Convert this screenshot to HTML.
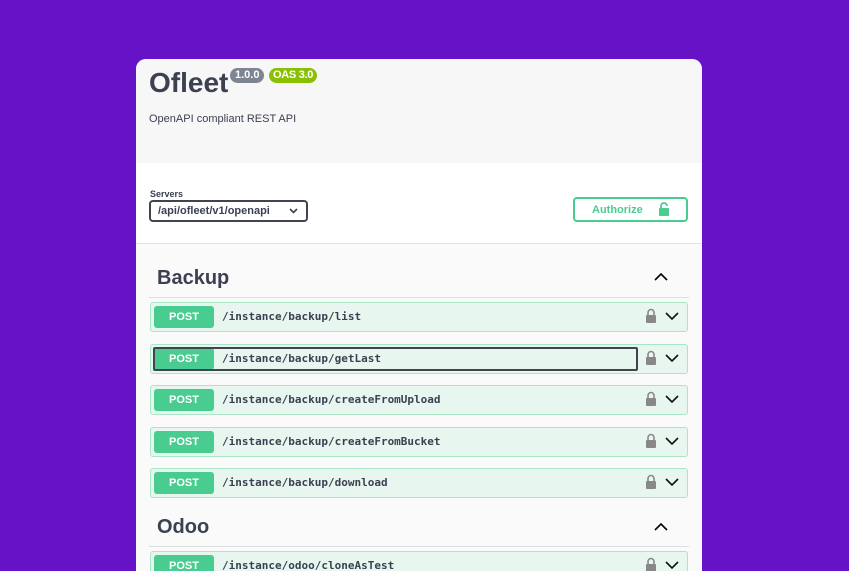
<!DOCTYPE html>
<html><head><meta charset="utf-8"><style>
*{margin:0;padding:0;box-sizing:border-box}
html,body{width:849px;height:571px;overflow:hidden}
body{background:#6613c8;font-family:"Liberation Sans",sans-serif;position:relative}
.card{position:absolute;left:136px;top:59px;width:566px;height:512px;background:#fafafa;border-radius:10px 10px 0 0;overflow:hidden}
.hdr{position:absolute;left:0;top:0;width:566px;height:104px;background:#f7f7f7}
.title{position:absolute;left:13px;top:8px;font-size:28px;font-weight:bold;color:#3b4151}
.badge{position:absolute;top:9px;height:15px;border-radius:8px;color:#fff;font-size:11px;font-weight:bold;line-height:15px;padding:0 5px}
.desc{position:absolute;left:13px;top:54px;font-size:11px;color:#3b4151}
.srv{position:absolute;left:0;top:104px;width:566px;height:81px;background:#fff;border-bottom:1px solid #e3e3e3}
.lbl{position:absolute;left:14px;top:26px;font-size:9px;font-weight:bold;color:#3b4151}
.sel{position:absolute;left:13px;top:37px;width:159px;height:22px;border:2px solid #41444e;border-radius:4px;font-size:11px;font-weight:bold;color:#3b4151;padding:3px 0 0 7px}
.auth{position:absolute;left:437px;top:34px;width:115px;height:25px;border:2px solid #49cc90;border-radius:4px;color:#49cc90;font-size:11px;font-weight:bold;padding:5px 0 0 17px}
.sec{position:absolute;left:21px;font-size:20px;font-weight:bold;color:#3b4151}
.line{position:absolute;left:13px;width:540px;height:1px;background:#dcdee2}
.up{position:absolute;left:518px}
.op{position:absolute;left:14px;width:538px;height:30px;background:#e8f6f0;border:1px solid #a8e6c6;border-radius:3px}
.post{position:absolute;left:3px;top:3px;width:60px;height:22px;background:#49cc90;border-radius:3px;color:#fff;font-size:11px;font-weight:bold;text-align:center;line-height:22px}
.path{position:absolute;left:71px;top:7px;font-family:"DejaVu Sans Mono","Liberation Mono",monospace;font-size:11px;font-weight:bold;color:#3b4151}
.ic{position:absolute;left:494px;top:5px}
.focus{position:absolute;left:2px;top:2px;width:485px;height:24px;border:2px solid #41444e;border-radius:2px}
</style></head><body>
<div class="card">
<div class="hdr">
<div class="title">Ofleet</div>
<div class="badge" style="left:94px;background:#7d8492">1.0.0</div>
<div class="badge" style="left:133px;background:#89bf04;padding:0 4px;letter-spacing:-0.3px">OAS 3.0</div>
<div class="desc">OpenAPI compliant REST API</div>
</div>
<div class="srv">
<div class="lbl">Servers</div>
<div class="sel">/api/ofleet/v1/openapi<svg style="position:absolute;left:138px;top:6px" width="9" height="6" viewBox="0 0 9 6"><path d="M1 1l3.5 3.5L8 1" stroke="#3b4151" stroke-width="1.6" fill="none"/></svg></div>
<div class="auth">Authorize<svg style="position:absolute;left:83px;top:3px" width="12" height="14" viewBox="0 0 12 14"><path d="M3 6V4a3 3 0 0 1 6 0" stroke="#49cc90" stroke-width="1.8" fill="none"/><rect x="1" y="6" width="10" height="8" rx="1" fill="#49cc90"/></svg></div>
</div>
<div class="sec" style="top:208px">Backup</div>
<svg class="up" style="top:213px" width="14" height="9" viewBox="0 0 14 9"><path d="M1 8l6-6 6 6" stroke="#000" stroke-width="1.6" fill="none"/></svg>
<div class="line" style="top:238px"></div>

<div class="op" style="top:243px"><div class="post">POST</div><div class="path">/instance/backup/list</div><div class="ic"><svg width="40" height="16" viewBox="0 0 40 16"><path d="M3 7V4.5a3 3 0 0 1 6 0V7" stroke="#888" stroke-width="1.6" fill="none"/><rect x="1" y="7" width="10" height="8" rx="1" fill="#888"/><path d="M21 5l6 6 6-6" stroke="#111" stroke-width="1.6" fill="none"/></svg></div></div>
<div class="op" style="top:285px"><div class="post">POST</div><div class="focus"></div><div class="path">/instance/backup/getLast</div><div class="ic"><svg width="40" height="16" viewBox="0 0 40 16"><path d="M3 7V4.5a3 3 0 0 1 6 0V7" stroke="#888" stroke-width="1.6" fill="none"/><rect x="1" y="7" width="10" height="8" rx="1" fill="#888"/><path d="M21 5l6 6 6-6" stroke="#111" stroke-width="1.6" fill="none"/></svg></div></div>
<div class="op" style="top:326px"><div class="post">POST</div><div class="path">/instance/backup/createFromUpload</div><div class="ic"><svg width="40" height="16" viewBox="0 0 40 16"><path d="M3 7V4.5a3 3 0 0 1 6 0V7" stroke="#888" stroke-width="1.6" fill="none"/><rect x="1" y="7" width="10" height="8" rx="1" fill="#888"/><path d="M21 5l6 6 6-6" stroke="#111" stroke-width="1.6" fill="none"/></svg></div></div>
<div class="op" style="top:368px"><div class="post">POST</div><div class="path">/instance/backup/createFromBucket</div><div class="ic"><svg width="40" height="16" viewBox="0 0 40 16"><path d="M3 7V4.5a3 3 0 0 1 6 0V7" stroke="#888" stroke-width="1.6" fill="none"/><rect x="1" y="7" width="10" height="8" rx="1" fill="#888"/><path d="M21 5l6 6 6-6" stroke="#111" stroke-width="1.6" fill="none"/></svg></div></div>
<div class="op" style="top:409px"><div class="post">POST</div><div class="path">/instance/backup/download</div><div class="ic"><svg width="40" height="16" viewBox="0 0 40 16"><path d="M3 7V4.5a3 3 0 0 1 6 0V7" stroke="#888" stroke-width="1.6" fill="none"/><rect x="1" y="7" width="10" height="8" rx="1" fill="#888"/><path d="M21 5l6 6 6-6" stroke="#111" stroke-width="1.6" fill="none"/></svg></div></div>

<div class="sec" style="top:457px">Odoo</div>
<svg class="up" style="top:463px" width="14" height="9" viewBox="0 0 14 9"><path d="M1 8l6-6 6 6" stroke="#000" stroke-width="1.6" fill="none"/></svg>
<div class="line" style="top:487px"></div>
<div class="op" style="top:492px"><div class="post">POST</div><div class="path">/instance/odoo/cloneAsTest</div><div class="ic"><svg width="40" height="16" viewBox="0 0 40 16"><path d="M3 7V4.5a3 3 0 0 1 6 0V7" stroke="#888" stroke-width="1.6" fill="none"/><rect x="1" y="7" width="10" height="8" rx="1" fill="#888"/><path d="M21 5l6 6 6-6" stroke="#111" stroke-width="1.6" fill="none"/></svg></div></div>
</div>
</body></html>
